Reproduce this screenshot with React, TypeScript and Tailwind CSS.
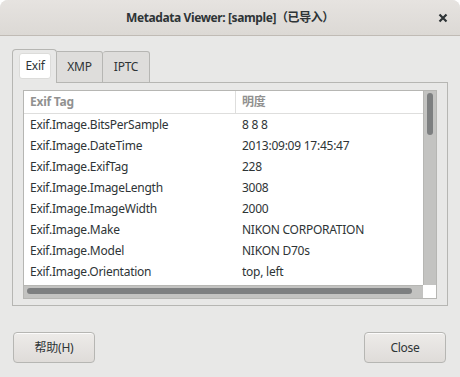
import React from 'react';

const rows: [string, string][] = [
  ['Exif.Image.BitsPerSample', '8 8 8'],
  ['Exif.Image.DateTime', '2013:09:09 17:45:47'],
  ['Exif.Image.ExifTag', '228'],
  ['Exif.Image.ImageLength', '3008'],
  ['Exif.Image.ImageWidth', '2000'],
  ['Exif.Image.Make', 'NIKON CORPORATION'],
  ['Exif.Image.Model', 'NIKON D70s'],
  ['Exif.Image.Orientation', 'top, left'],
];

const font = { fontFamily: '"Noto Sans", "Noto Sans CJK SC", sans-serif' };

const App = () => {
  return (
    <div className="w-[460px] h-[377px] bg-white" style={font}>
      <div className="w-full h-full flex flex-col bg-[#e8e8e7] rounded-t-[8px] overflow-hidden text-[#2e3436]">
        {/* Title bar */}
        <div className="h-[36px] shrink-0 flex items-center border-b border-[#c0bbb5] bg-gradient-to-b from-[#e6e3e0] to-[#dcd9d5]">
          <div className="w-[40px]" />
          <div className="flex-1 text-center text-[12px] font-bold tracking-[-0.4px] text-[#2e3436]">
            Metadata Viewer: [sample]（已导入）
          </div>
          <div className="w-[40px] flex justify-center pl-[6px]">
            <svg width="10" height="10" viewBox="0 0 10 10">
              <path d="M1.5 1.5 L8.5 8.5 M8.5 1.5 L1.5 8.5" stroke="#2e3436" strokeWidth="2.2" strokeLinecap="butt" />
            </svg>
          </div>
        </div>

        {/* Notebook */}
        <div className="px-[12px] pt-[13px]">
          <div className="flex items-end h-[34px] text-[12px] tracking-[-0.25px]">
            <div className="w-[45px] h-[34px] border border-b-0 border-[#b6b6b3] rounded-t-[4px] bg-[#e8e8e7] pl-[6px] pr-[5px] pt-[3px]">
              <div className="h-[26px] bg-white border border-[#dcdcda] rounded-[3px] flex items-center justify-center">
                Exif
              </div>
            </div>
            <div className="w-[46px] h-[32px] border border-l-0 border-[#b6b6b3] rounded-tr-[3px] bg-[#dedddb] flex items-center justify-center">
              XMP
            </div>
            <div className="w-[47px] h-[32px] border border-l-0 border-[#b6b6b3] rounded-t-[3px] bg-[#dedddb] flex items-center justify-center">
              IPTC
            </div>
            <div className="flex-1 h-[34px] border-b border-[#b6b6b3]" />
          </div>
          <div className="h-[223px] border border-t-0 border-[#b6b6b3] pt-[7px] px-[10px] pb-[6px]">
            <div className="h-[209px] border border-[#b6b6b3] bg-white grid grid-cols-[399px_13px] grid-rows-[194px_13px] text-[12px] tracking-[-0.25px]">
              <div className="overflow-hidden">
                <div className="h-[23px] flex border-b border-[#dededd] text-[#919190] font-bold">
                  <div className="w-[212px] border-r border-[#dededd] pl-[6px] flex items-center">Exif Tag</div>
                  <div className="flex-1 pl-[6px] flex items-center">明度</div>
                </div>
                {rows.map(([k, v]) => (
                  <div key={k} className="h-[21px] flex items-center">
                    <div className="w-[212px] pl-[6px] whitespace-nowrap">{k}</div>
                    <div className="flex-1 pl-[6px] whitespace-nowrap">{v}</div>
                  </div>
                ))}
              </div>
              <div className="bg-[#c3c3c1] border-l border-[#b6b6b3] pt-[2px] pl-[3px]">
                <div className="w-[6px] h-[42px] rounded-full bg-[#7d7f80]" />
              </div>
              <div className="bg-[#c3c3c1] border-t border-[#b6b6b3] pt-[2px] pl-[3px]">
                <div className="w-[385px] h-[6px] rounded-full bg-[#7d7f80]" />
              </div>
              <div className="bg-white" />
            </div>
          </div>
        </div>

        {/* Buttons */}
        <div className="flex justify-between pl-[13px] pr-[14px] pt-[26px] text-[12px] tracking-[-0.25px]">
          <button className="w-[82px] h-[31px] rounded-[4px] border border-[#b6b6b3] bg-gradient-to-b from-[#edebe9] to-[#dfdcd9] shadow-[0_1px_0_rgba(255,255,255,0.8)_inset]">
            帮助(H)
          </button>
          <button className="w-[82px] h-[31px] rounded-[4px] border border-[#b6b6b3] bg-gradient-to-b from-[#edebe9] to-[#dfdcd9] shadow-[0_1px_0_rgba(255,255,255,0.8)_inset]">
            Close
          </button>
        </div>
      </div>
    </div>
  );
};

export default App;
